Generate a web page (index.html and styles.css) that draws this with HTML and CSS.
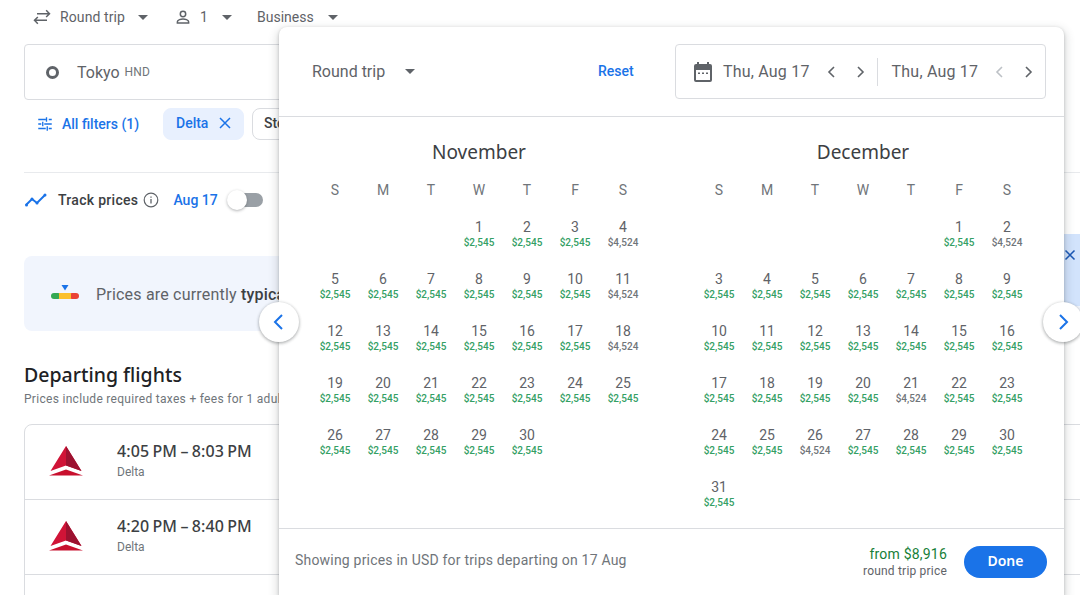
FILE: index.html
```html
<!DOCTYPE html>
<html lang="en">
  <head>
    <meta charset="UTF-8" />
    <title>Flights</title>
    <link rel="stylesheet" href="styles.css">
  </head>
  <body>
    <main class="page">
      <div class="trip-bar">
        <div class="trip-opt opt-trip">
          <svg class="ic" width="20" height="20" viewBox="0 0 24 24"><path d="M17 4l4 4-4 4M21 8H6M7 12l-4 4 4 4M3 16h15" fill="none" stroke="#5f6368" stroke-width="1.8"/></svg>
          <span>Round trip</span><i class="caret"></i>
        </div>
        <div class="trip-opt opt-people">
          <svg class="ic" width="18" height="18" viewBox="0 0 24 24"><circle cx="12" cy="8" r="3.6" fill="none" stroke="#5f6368" stroke-width="2"/><path d="M4.5 20v-1.6c0-2.6 5-3.9 7.500-3.900s7.500 1.300 7.500 3.900V20z" fill="none" stroke="#5f6368" stroke-width="2"/></svg>
          <span>1</span><i class="caret"></i>
        </div>
        <div class="trip-opt opt-class">
          <span>Business</span><i class="caret"></i>
        </div>
      </div>

      <div class="search-box">
        <i class="origin-dot"></i>
        <span class="city">Tokyo</span><span class="code">HND</span>
      </div>

      <div class="filters">
        <button class="all-filters">
          <svg width="18" height="18" viewBox="0 0 24 24"><path d="M3 6h10M17 6h4M3 12h4M11 12h10M3 18h10M17 18h4M14 3v6M9 9v6M15 15v6" fill="none" stroke="#1a73e8" stroke-width="1.800"/></svg>
          All filters (1)
        </button>
        <div class="chip chip-on">Delta
          <svg width="14" height="14" viewBox="0 0 14 14"><path d="M2 2l10 10M12 2L2 12" stroke="#1a73e8" stroke-width="1.500"/></svg>
        </div>
        <div class="chip">Stops</div>
      </div>

      <div class="track">
        <svg width="24" height="24" viewBox="0 0 24 24"><path d="M2 17l6-6 5 4 8-8" fill="none" stroke="#1a73e8" stroke-width="2"/><circle cx="2.500" cy="17" r="1.500" fill="#1a73e8"/><circle cx="8" cy="11" r="1.500" fill="#1a73e8"/><circle cx="13" cy="15" r="1.500" fill="#1a73e8"/><circle cx="21" cy="7" r="1.500" fill="#1a73e8"/></svg>
        <span class="track-label">Track prices</span>
        <svg width="16" height="16" viewBox="0 0 16 16"><circle cx="8" cy="8" r="6.800" fill="none" stroke="#5f6368" stroke-width="1.200"/><path d="M8 7v4.500M8 4.500v1.300" stroke="#5f6368" stroke-width="1.300"/></svg>
        <span class="track-date">Aug 17</span>
        <div class="toggle"><i class="knob"></i></div>
      </div>

      <div class="insight">
        <svg width="28" height="18" viewBox="0 0 28 18"><path d="M10.500 0h7L14 5.500z" fill="#1a73e8"/><rect x="0" y="8" width="10" height="6" rx="3" fill="#34a853"/><rect x="18" y="8" width="10" height="6" rx="3" fill="#ea4335"/><rect x="8" y="8" width="12" height="6" fill="#fbc02d"/></svg>
        <span>Prices are currently <b>typical</b></span>
      </div>

      <h2 class="section-title">Departing flights</h2>
      <p class="section-sub">Prices include required taxes + fees for 1 adult.</p>

      <div class="flights">
        <div class="flight">
          <svg class="logo" width="36" height="30" viewBox="0 0 36 30"><path d="M18 0L2.500 25 18 19.500 33.500 25z" fill="#d01437"/><path d="M18 0v19.500L33.500 25z" fill="#9c1230"/><path d="M1 29.500L18 23.500 35 29.500z" fill="#c8102e"/></svg>
          <div>
            <div class="times">4:05 PM – 8:03 PM</div>
            <div class="airline">Delta</div>
          </div>
        </div>
        <div class="flight">
          <svg class="logo" width="36" height="30" viewBox="0 0 36 30"><path d="M18 0L2.500 25 18 19.500 33.500 25z" fill="#d01437"/><path d="M18 0v19.500L33.500 25z" fill="#9c1230"/><path d="M1 29.500L18 23.500 35 29.500z" fill="#c8102e"/></svg>
          <div>
            <div class="times">4:20 PM – 8:40 PM</div>
            <div class="airline">Delta</div>
          </div>
        </div>
        <div class="flight"></div>
      </div>
    </main>

    <div class="toast">
      <svg width="12" height="12" viewBox="0 0 12 12"><path d="M1.500 1.500l9 9M10.500 1.500l-9 9" stroke="#1a57b5" stroke-width="1.500"/></svg>
    </div>

    <section class="picker">
      <header class="picker-head">
        <div class="picker-trip"><span>Round trip</span><i class="caret"></i></div>
        <a class="reset">Reset</a>
        <div class="dates">
          <svg class="cal" width="24" height="24" viewBox="0 0 24 24"><path d="M5 4h1V2h2v2h8V2h2v2h1a2 2 0 0 1 2 2v14a2 2 0 0 1-2 2H5a2 2 0 0 1-2-2V6a2 2 0 0 1 2-2zm0 6v10h14V10z" fill="#5f6368"/><path d="M7 12.500h2v1.500H7zM11 12.500h2v1.500h-2zM15 12.500h2v1.500h-2z" fill="#5f6368"/></svg>
          <span class="date-text">Thu, Aug 17</span>
          <svg class="chev" width="18" height="18" viewBox="0 0 18 18"><path d="M11 4L6 9l5 5" fill="none" stroke="#5f6368" stroke-width="1.600"/></svg>
          <svg class="chev" width="18" height="18" viewBox="0 0 18 18"><path d="M7 4l5 5-5 5" fill="none" stroke="#5f6368" stroke-width="1.600"/></svg>
          <i class="date-sep"></i>
          <span class="date-text date-text-end">Thu, Aug 17</span>
          <svg class="chev" width="18" height="18" viewBox="0 0 18 18"><path d="M11 4L6 9l5 5" fill="none" stroke="#bdc1c6" stroke-width="1.600"/></svg>
          <svg class="chev" width="18" height="18" viewBox="0 0 18 18"><path d="M7 4l5 5-5 5" fill="none" stroke="#5f6368" stroke-width="1.600"/></svg>
        </div>
      </header>

      <div class="months">
        <div class="month">
          <h3 class="month-name">November</h3>
          <div class="grid">
            <div class="wd">S</div><div class="wd">M</div><div class="wd">T</div><div class="wd">W</div><div class="wd">T</div><div class="wd">F</div><div class="wd">S</div>
            <div class="day"></div><div class="day"></div><div class="day"></div>
            <div class="day">1<span class="fare">$2,545</span></div>
            <div class="day">2<span class="fare">$2,545</span></div>
            <div class="day">3<span class="fare">$2,545</span></div>
            <div class="day">4<span class="fare high">$4,524</span></div>
            <div class="day">5<span class="fare">$2,545</span></div>
            <div class="day">6<span class="fare">$2,545</span></div>
            <div class="day">7<span class="fare">$2,545</span></div>
            <div class="day">8<span class="fare">$2,545</span></div>
            <div class="day">9<span class="fare">$2,545</span></div>
            <div class="day">10<span class="fare">$2,545</span></div>
            <div class="day">11<span class="fare high">$4,524</span></div>
            <div class="day">12<span class="fare">$2,545</span></div>
            <div class="day">13<span class="fare">$2,545</span></div>
            <div class="day">14<span class="fare">$2,545</span></div>
            <div class="day">15<span class="fare">$2,545</span></div>
            <div class="day">16<span class="fare">$2,545</span></div>
            <div class="day">17<span class="fare">$2,545</span></div>
            <div class="day">18<span class="fare high">$4,524</span></div>
            <div class="day">19<span class="fare">$2,545</span></div>
            <div class="day">20<span class="fare">$2,545</span></div>
            <div class="day">21<span class="fare">$2,545</span></div>
            <div class="day">22<span class="fare">$2,545</span></div>
            <div class="day">23<span class="fare">$2,545</span></div>
            <div class="day">24<span class="fare">$2,545</span></div>
            <div class="day">25<span class="fare">$2,545</span></div>
            <div class="day">26<span class="fare">$2,545</span></div>
            <div class="day">27<span class="fare">$2,545</span></div>
            <div class="day">28<span class="fare">$2,545</span></div>
            <div class="day">29<span class="fare">$2,545</span></div>
            <div class="day">30<span class="fare">$2,545</span></div>
          </div>
        </div>
        <div class="month">
          <h3 class="month-name">December</h3>
          <div class="grid">
            <div class="wd">S</div><div class="wd">M</div><div class="wd">T</div><div class="wd">W</div><div class="wd">T</div><div class="wd">F</div><div class="wd">S</div>
            <div class="day"></div><div class="day"></div><div class="day"></div><div class="day"></div><div class="day"></div>
            <div class="day">1<span class="fare">$2,545</span></div>
            <div class="day">2<span class="fare high">$4,524</span></div>
            <div class="day">3<span class="fare">$2,545</span></div>
            <div class="day">4<span class="fare">$2,545</span></div>
            <div class="day">5<span class="fare">$2,545</span></div>
            <div class="day">6<span class="fare">$2,545</span></div>
            <div class="day">7<span class="fare">$2,545</span></div>
            <div class="day">8<span class="fare">$2,545</span></div>
            <div class="day">9<span class="fare">$2,545</span></div>
            <div class="day">10<span class="fare">$2,545</span></div>
            <div class="day">11<span class="fare">$2,545</span></div>
            <div class="day">12<span class="fare">$2,545</span></div>
            <div class="day">13<span class="fare">$2,545</span></div>
            <div class="day">14<span class="fare">$2,545</span></div>
            <div class="day">15<span class="fare">$2,545</span></div>
            <div class="day">16<span class="fare">$2,545</span></div>
            <div class="day">17<span class="fare">$2,545</span></div>
            <div class="day">18<span class="fare">$2,545</span></div>
            <div class="day">19<span class="fare">$2,545</span></div>
            <div class="day">20<span class="fare">$2,545</span></div>
            <div class="day">21<span class="fare high">$4,524</span></div>
            <div class="day">22<span class="fare">$2,545</span></div>
            <div class="day">23<span class="fare">$2,545</span></div>
            <div class="day">24<span class="fare">$2,545</span></div>
            <div class="day">25<span class="fare">$2,545</span></div>
            <div class="day">26<span class="fare high">$4,524</span></div>
            <div class="day">27<span class="fare">$2,545</span></div>
            <div class="day">28<span class="fare">$2,545</span></div>
            <div class="day">29<span class="fare">$2,545</span></div>
            <div class="day">30<span class="fare">$2,545</span></div>
            <div class="day">31<span class="fare">$2,545</span></div>
          </div>
        </div>
      </div>

      <footer class="picker-foot">
        <span class="foot-note">Showing prices in USD for trips departing on 17 Aug</span>
        <div class="foot-price">
          <div class="from">from $8,916</div>
          <div class="rt">round trip price</div>
        </div>
        <button class="done">Done</button>
      </footer>

      <button class="page-btn page-prev">
        <svg width="24" height="24" viewBox="0 0 24 24"><path d="M15 5l-7 7 7 7" fill="none" stroke="#1a73e8" stroke-width="2"/></svg>
      </button>
      <button class="page-btn page-next">
        <svg width="24" height="24" viewBox="0 0 24 24"><path d="M9 5l7 7-7 7" fill="none" stroke="#1a73e8" stroke-width="2"/></svg>
      </button>
    </section>
  </body>
</html>
```

FILE: styles.css
```css
html, body {
  margin: 0;
  height: 595px;
  overflow: hidden;
  background: #fff;
}
body {
  font-family: Roboto, "Liberation Sans", sans-serif;
  color: #3c4043;
  position: relative;
}
button {
  font-family: inherit;
  border: none;
  background: none;
  padding: 0;
}

.page {
  padding: 0 0 0 24px;
  width: 1100px;
  height: 595px;
  overflow: hidden;
}

/* top selectors */
.trip-bar {
  display: flex;
  align-items: center;
  height: 34px;
  font-size: 14px;
  color: #5f6368;
}
.trip-opt {
  display: flex;
  align-items: center;
}
.opt-trip { margin-left: 8px; width: 142px; }
.opt-trip span { margin-left: 8px; letter-spacing: 0.1px; }
.opt-trip .caret { margin-left: 13px; }
.opt-people { width: 83px; }
.opt-people span { margin-left: 8px; }
.opt-people .caret { margin-left: 14px; }
.opt-class .caret { margin-left: 14px; }
.caret {
  display: inline-block;
  width: 0;
  height: 0;
  border-left: 5px solid transparent;
  border-right: 5px solid transparent;
  border-top: 5px solid #5f6368;
}

/* search */
.search-box {
  display: flex;
  align-items: center;
  margin-top: 10px;
  height: 54px;
  width: 400px;
  border: 1px solid #dadce0;
  border-radius: 4px;
}
.origin-dot {
  width: 7px;
  height: 7px;
  margin-left: 21px;
  border: 3px solid #5f6368;
  border-radius: 50%;
}
.city {
  font-size: 16px;
  margin-left: 18px;
  color: #5f6368;
}
.code {
  font-size: 12px;
  margin-left: 5px;
  letter-spacing: 0.1px;
  color: #70757a;
}

/* filters */
.filters {
  display: flex;
  align-items: center;
  margin-top: 8px;
  height: 32px;
}
.all-filters {
  display: flex;
  align-items: center;
  gap: 8px;
  margin-left: 12px;
  padding-bottom: 1px;
  width: 127px;
  color: #1a73e8;
  font-size: 14px;
  font-weight: 500;
}
.chip {
  display: flex;
  align-items: center;
  height: 28px;
  padding: 0 11px 2px;
  border: 1px solid #dadce0;
  border-radius: 8px;
  font-size: 14px;
  font-weight: 500;
  color: #3c4043;
  margin-left: 8px;
}
.chip-on {
  margin-left: 0;
  width: 81px;
  box-sizing: border-box;
  height: 32px;
  padding: 0 11px 2px 12px;
  justify-content: space-between;
  background: #e8f0fe;
  border-color: #e8f0fe;
  color: #1a73e8;
}

/* track prices */
.track {
  display: flex;
  align-items: center;
  margin-top: 32px;
  padding-top: 11px;
  height: 32px;
  width: 1100px;
  border-top: 1px solid #e8eaed;
}
.track-label {
  margin-left: 10px;
  font-size: 14px;
  font-weight: 500;
  letter-spacing: 0.3px;
  color: #3c4043;
}
.track > svg:nth-of-type(2) { margin-left: 5px; }
.track-date {
  margin-left: 14px;
  font-size: 14px;
  font-weight: 500;
  color: #1a73e8;
}
.toggle {
  position: relative;
  width: 36px;
  height: 14px;
  margin-left: 9px;
}
.toggle::before {
  content: "";
  display: block;
  margin-left: 4px;
  width: 32px;
  height: 14px;
  border-radius: 7px;
  background: #9aa0a6;
}
.knob {
  position: absolute;
  left: 0;
  top: -3px;
  width: 20px;
  height: 20px;
  border-radius: 50%;
  background: #fff;
  box-shadow: 0 1px 3px rgba(60, 64, 67, 0.4);
}

/* price insight */
.insight {
  display: flex;
  align-items: center;
  margin-top: 40px;
  width: 1100px;
  height: 75px;
  box-sizing: border-box;
  padding-left: 27px;
  border-radius: 8px;
  background: #f1f5fd;
  font-size: 16px;
  letter-spacing: 0.2px;
  color: #5f6368;
}
.insight span { margin-left: 17px; padding-top: 2px; }
.insight b { color: #3c4043; font-weight: 500; }

/* flights */
.section-title {
  margin: 31px 0 0;
  font-family: "Noto Sans", sans-serif;
  font-size: 19.500px;
  font-weight: 500;
  line-height: 26px;
  color: #202124;
}
.section-sub {
  margin: 3px 0 0;
  font-size: 12px;
  line-height: 16px;
  letter-spacing: 0.3px;
  color: #70757a;
}
.flights {
  margin-top: 17px;
  width: 1100px;
  border: 1px solid #dadce0;
  border-radius: 8px;
}
.flight {
  display: flex;
  height: 74px;
  border-bottom: 1px solid #dadce0;
}
.logo {
  margin: 21px 33px 0 23px;
}
.times {
  margin-top: 16px;
  font-family: "Noto Sans", sans-serif;
  font-size: 16px;
  font-weight: 500;
  line-height: 20px;
  word-spacing: -1px;
  letter-spacing: 0.1px;
  color: #3c4043;
}
.airline {
  margin-top: 3px;
  font-size: 12px;
  line-height: 16px;
  color: #70757a;
}

/* right side message */
.toast {
  position: absolute;
  left: 1060px;
  top: 234px;
  width: 20px;
  height: 72px;
  box-sizing: border-box;
  padding: 15px 0 0 3px;
  background: #d2e3fc;
}
.toast svg { display: block; margin-left: 1px; }

/* date picker dialog */
.picker {
  position: absolute;
  left: 279px;
  top: 27px;
  width: 785px;
  height: 568px;
  background: #fff;
  border-radius: 8px 8px 0 0;
  box-shadow: 0 1px 3px rgba(60, 64, 67, 0.3), 0 4px 8px 3px rgba(60, 64, 67, 0.15);
}
.picker-head {
  display: flex;
  align-items: center;
  height: 90px;
  box-sizing: border-box;
  border-bottom: 1px solid #dadce0;
}
.picker-trip {
  display: flex;
  align-items: center;
  margin-left: 33px;
  width: 286px;
  font-size: 16px;
  color: #5f6368;
}
.picker-trip .caret { margin-left: 20px; }
.reset {
  margin-bottom: 2px;
  font-size: 14px;
  font-weight: 500;
  color: #1a73e8;
  width: 77px;
}
.dates {
  display: flex;
  align-items: center;
  width: 371px;
  height: 55px;
  box-sizing: border-box;
  border: 1px solid #dadce0;
  border-radius: 4px;
  font-size: 16px;
  letter-spacing: 0.2px;
  color: #5f6368;
}
.cal { margin-left: 15px; }
.date-text { margin-left: 8px; white-space: nowrap; }
.date-text-end { margin-left: 0; }
.dates .chev { margin-left: 13px; }
.dates .chev + .chev { margin-left: 10px; }
.date-sep {
  width: 1px;
  height: 28px;
  margin: 0 14px 0 8px;
  background: #dadce0;
}

.months {
  display: flex;
  gap: 48px;
  padding-left: 32px;
  height: 411px;
}
.month { width: 336px; }
.month-name {
  margin: 23px 0 0;
  text-align: center;
  font-family: "Noto Sans", sans-serif;
  font-size: 19px;
  font-weight: 400;
  line-height: 24px;
  color: #3c4043;
}
.grid {
  display: grid;
  grid-template-columns: repeat(7, 48px);
  grid-auto-rows: 52px;
  grid-template-rows: 36px;
  margin-top: 18px;
}
.wd {
  text-align: center;
  font-size: 14px;
  line-height: 16px;
  color: #70757a;
}
.day {
  text-align: center;
  font-size: 14px;
  line-height: 19px;
  color: #5f6368;
}
.fare {
  display: block;
  font-size: 10px;
  font-weight: 500;
  line-height: 12px;
  color: #34a065;
}
.fare.high {
  color: #70757a;
}

.picker-foot {
  display: flex;
  align-items: center;
  height: 66px;
  padding-left: 16px;
  border-top: 1px solid #dadce0;
}
.foot-note {
  margin-bottom: 4px;
  font-size: 14px;
  letter-spacing: 0.2px;
  color: #70757a;
}
.foot-price {
  margin-left: auto;
  text-align: right;
  letter-spacing: 0.2px;
}
.from {
  font-size: 14px;
  line-height: 18px;
  color: #188038;
}
.rt {
  font-size: 12px;
  line-height: 17px;
  color: #5f6368;
}
.done {
  width: 83px;
  height: 32px;
  margin: 0 17px;
  padding-bottom: 3px;
  border-radius: 16px;
  background: #1a73e8;
  color: #fff;
  font-family: "Noto Sans", sans-serif;
  font-size: 14px;
  font-weight: 600;
}

.page-btn {
  position: absolute;
  top: 275px;
  width: 40px;
  height: 40px;
  display: flex;
  align-items: center;
  justify-content: center;
  border-radius: 50%;
  background: #fff;
  box-shadow: 0 1px 3px rgba(60, 64, 67, 0.3), 0 1px 3px 1px rgba(60, 64, 67, 0.15);
}
.page-prev { left: -20px; }
.page-next { left: 764px; }
```
